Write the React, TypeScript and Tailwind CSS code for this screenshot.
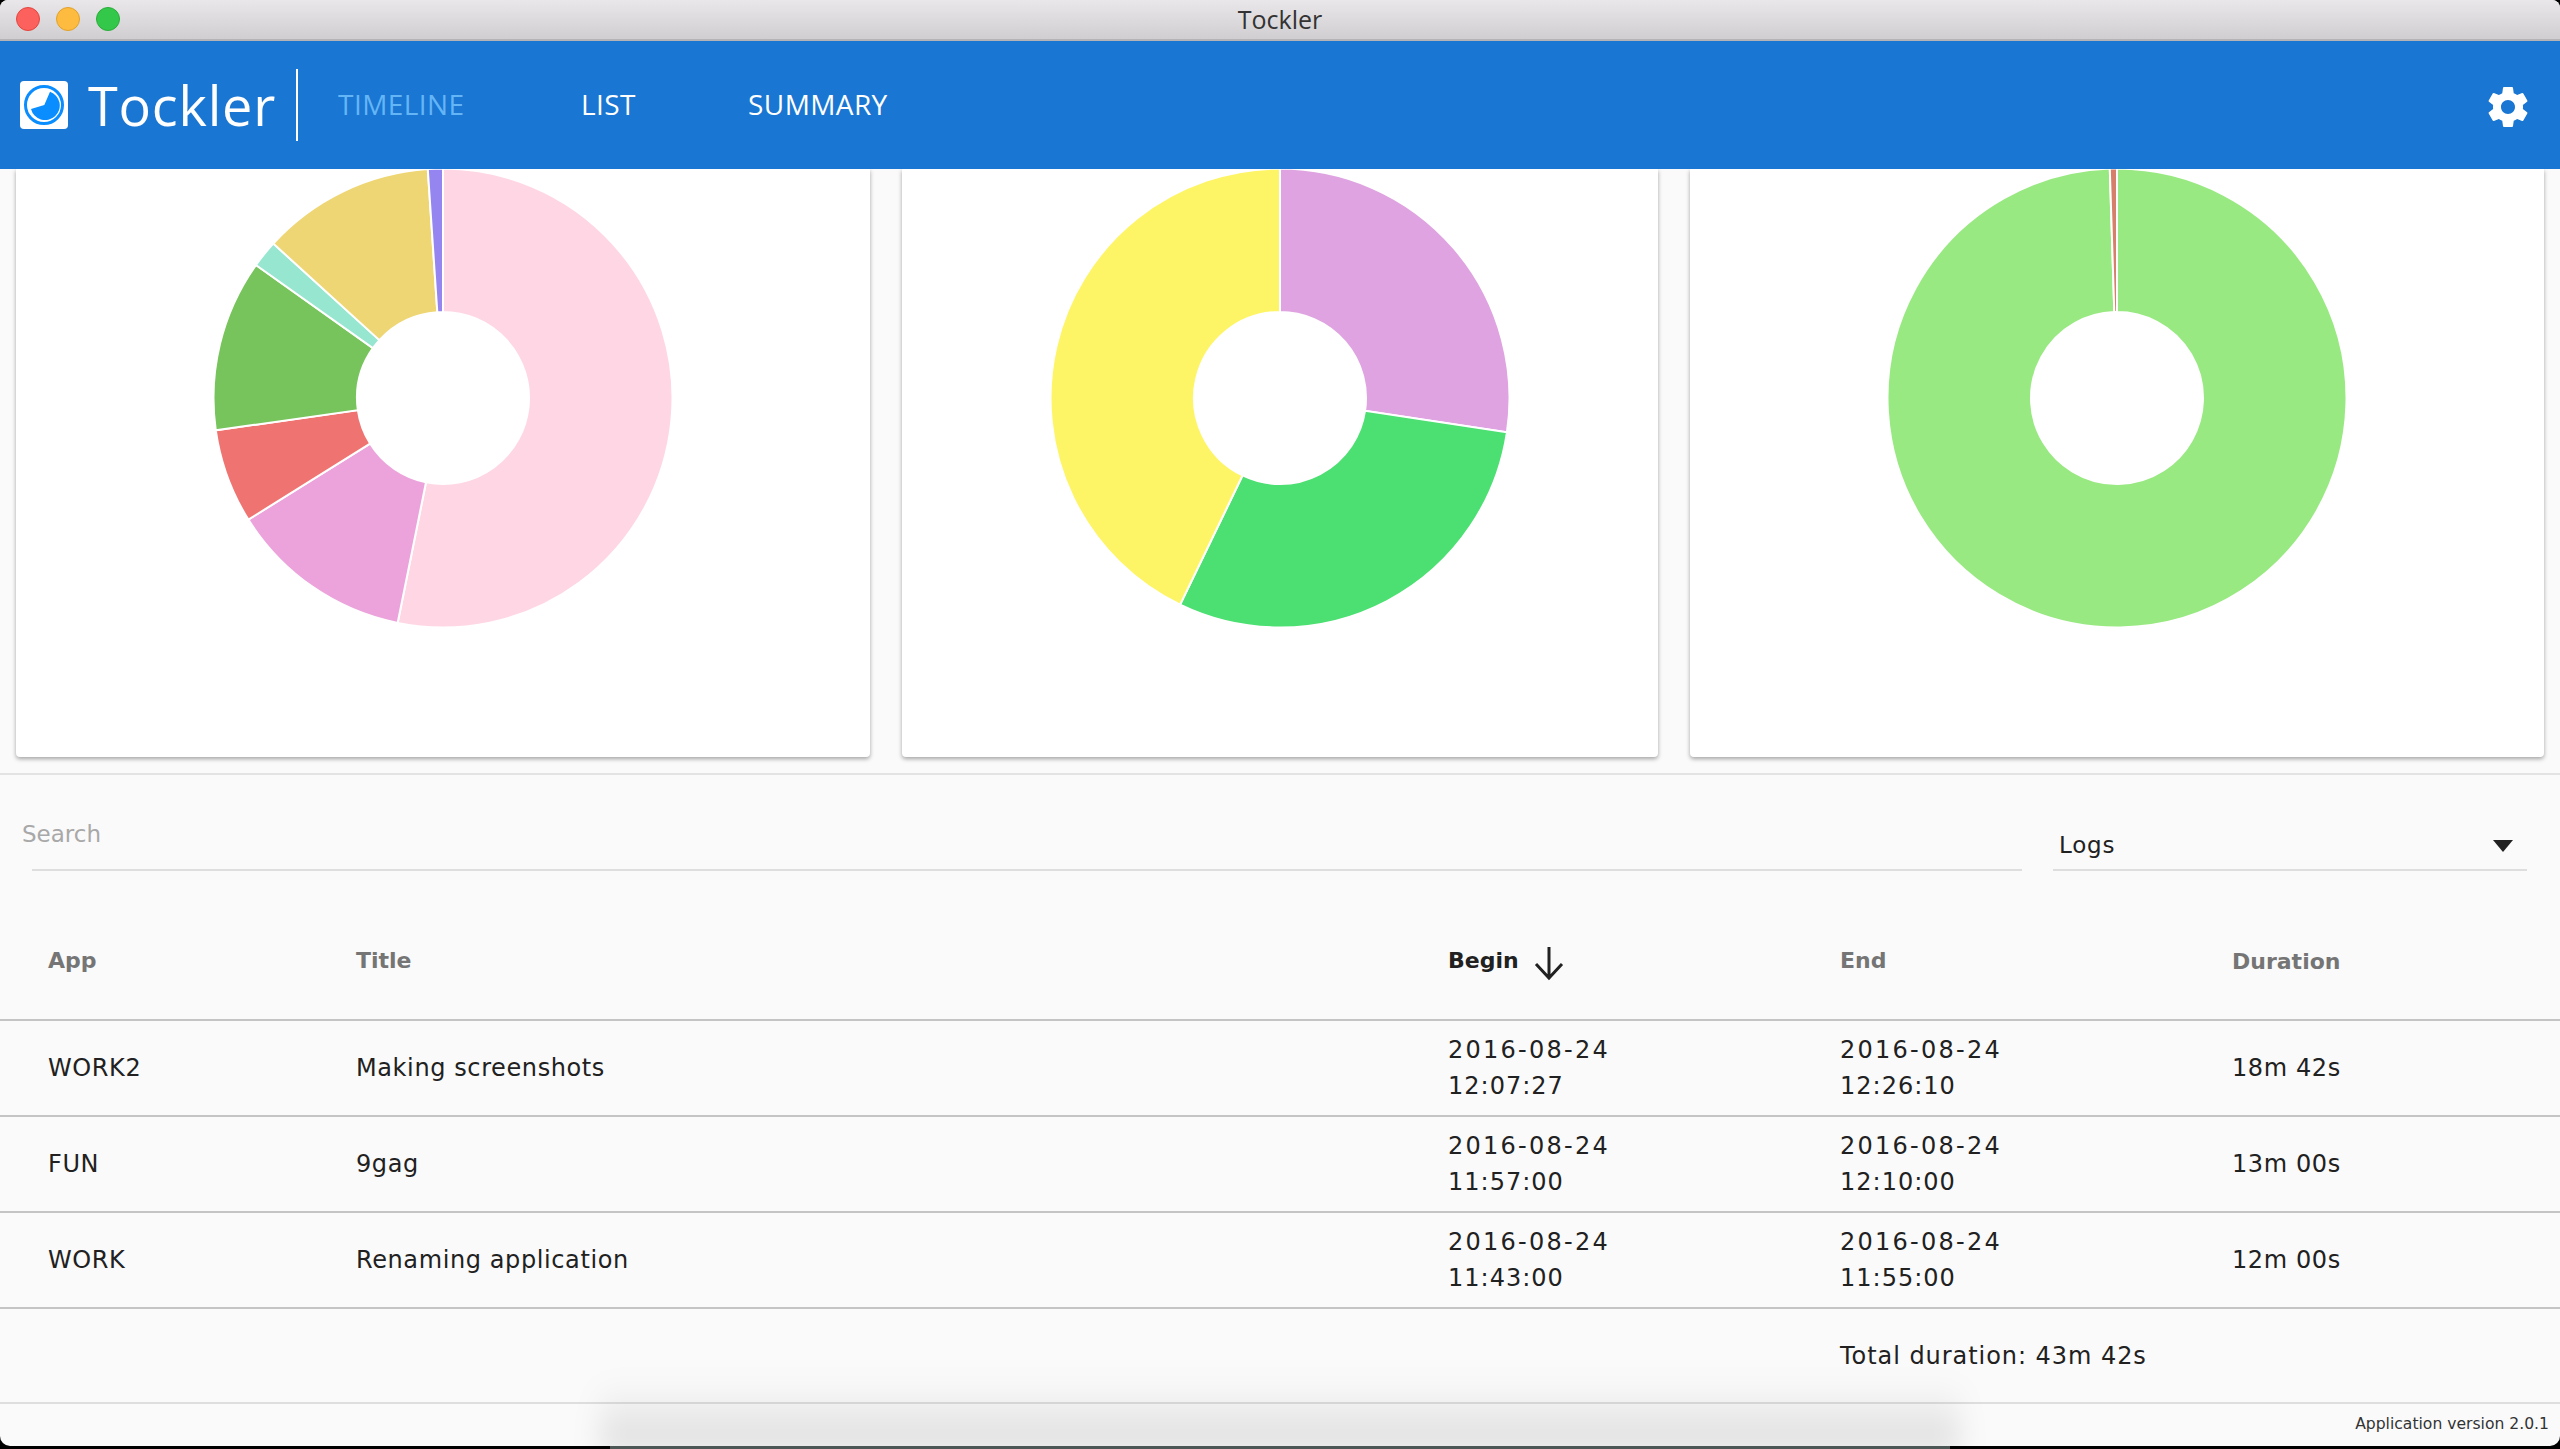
const font = { fontFamily: '"DejaVu Sans", "Noto Sans", sans-serif' };
const headFont = { fontFamily: '"Open Sans", "Noto Sans", sans-serif' };

function polar(cx: number, cy: number, r: number, a: number) {
  const t = (a * Math.PI) / 180;
  return [cx + r * Math.sin(t), cy - r * Math.cos(t)];
}

function slicePath(a0: number, a1: number) {
  const R = 229.5;
  const r = 86;
  const c = 230;
  const [x0, y0] = polar(c, c, R, a0);
  const [x1, y1] = polar(c, c, R, a1);
  const [x2, y2] = polar(c, c, r, a1);
  const [x3, y3] = polar(c, c, r, a0);
  const large = a1 - a0 > 180 ? 1 : 0;
  return `M${x0} ${y0}A${R} ${R} 0 ${large} 1 ${x1} ${y1}L${x2} ${y2}A${r} ${r} 0 ${large} 0 ${x3} ${y3}Z`;
}

function Donut({ slices }: { slices: [number, number, string][] }) {
  return (
    <svg width="460" height="460" viewBox="0 0 460 460" className="-mt-[1px] block shrink-0">
      {slices.map(([a, b, color]) => (
        <path key={a} d={slicePath(a, b)} fill={color} stroke="#ffffff" strokeWidth="2" />
      ))}
    </svg>
  );
}

function Card({ className, children }: { className: string; children: React.ReactNode }) {
  return (
    <div className={`flex justify-center rounded-b-[4px] bg-white shadow-[0_2px_4px_rgba(0,0,0,0.35)] ${className}`}>
      {children}
    </div>
  );
}

const rows = [
  ['WORK2', 'Making screenshots', '2016-08-24', '12:07:27', '2016-08-24', '12:26:10', '18m 42s'],
  ['FUN', '9gag', '2016-08-24', '11:57:00', '2016-08-24', '12:10:00', '13m 00s'],
  ['WORK', 'Renaming application', '2016-08-24', '11:43:00', '2016-08-24', '11:55:00', '12m 00s'],
];

function DateCell({ date, time }: { date: string; time: string }) {
  return (
    <td>
      <span className="block tracking-[2.25px]">{date}</span>
      <span className="block tracking-[1px]">{time}</span>
    </td>
  );
}

export default function App() {
  return (
    <div className="relative h-[1449px] w-[2560px] overflow-hidden bg-black">
      <div className="absolute bottom-0 left-[610px] h-[3px] w-[1340px] bg-[#4d5856]" />
      <div style={font} className="relative flex h-[1446px] w-[2560px] flex-col overflow-hidden rounded-b-[10px] rounded-t-[8px] bg-[#fafafa] text-[#212121]">
        <div style={headFont} className="relative flex h-[41px] shrink-0 items-center justify-center border-b-2 border-[#b5b3b5] bg-gradient-to-b from-[#e9e7e9] to-[#d0ced0]">
          <div className="absolute left-[16px] top-[7px] flex gap-[16px]">
            <span className="h-[24px] w-[24px] rounded-full border border-[#e2463f] bg-[#fc615d]" />
            <span className="h-[24px] w-[24px] rounded-full border border-[#e1a02a] bg-[#fdbc40]" />
            <span className="h-[24px] w-[24px] rounded-full border border-[#2aac3a] bg-[#34c84a]" />
          </div>
          <span className="text-[25px] leading-none text-[#333333]">Tockler</span>
        </div>

        <header style={headFont} className="flex h-[128px] shrink-0 items-center bg-[#1976d2] pl-[20px] pr-[32px] text-white">
          <svg width="48" height="48" viewBox="0 0 48 48" className="shrink-0">
            <rect width="48" height="48" rx="4" fill="#ffffff" />
            <circle cx="24" cy="24" r="18.5" fill="none" stroke="#0a8dff" strokeWidth="3" />
            <path d="M11 28 L24.3 24 L30 10.7 A14.6 14.6 0 1 1 11 28Z" fill="#0a8dff" />
          </svg>
          <span className="ml-[20px] text-[54px] font-normal leading-none tracking-[0.8px]">Tockler</span>
          <span className="ml-[20px] h-[72px] w-[2px] bg-white" />
          <nav className="mb-[2px] ml-[40px] flex text-[28px] leading-none tracking-[0.4px]">
            <span className="w-[243px] text-[#64b5f6]">TIMELINE</span>
            <span className="w-[167px]">LIST</span>
            <span>SUMMARY</span>
          </nav>
          <svg width="48" height="48" viewBox="0 0 24 24" fill="#ffffff" className="-mr-[4px] ml-auto mt-[4px]">
            <path d="M19.43 12.98c.04-.32.07-.64.07-.98s-.03-.66-.07-.98l2.11-1.65c.19-.15.24-.42.12-.64l-2-3.46c-.12-.22-.39-.3-.61-.22l-2.49 1c-.52-.4-1.08-.73-1.69-.98l-.38-2.65C14.46 2.18 14.25 2 14 2h-4c-.25 0-.46.18-.49.42l-.38 2.65c-.61.25-1.17.59-1.69.98l-2.49-1c-.23-.09-.49 0-.61.22l-2 3.46c-.13.22-.07.49.12.64l2.11 1.65c-.04.32-.07.65-.07.98s.03.66.07.98l-2.11 1.65c-.19.15-.24.42-.12.64l2 3.46c.12.22.39.3.61.22l2.49-1c.52.4 1.08.73 1.69.98l.38 2.65c.03.24.24.42.49.42h4c.25 0 .46-.18.49-.42l.38-2.65c.61-.25 1.17-.59 1.69-.98l2.49 1c.23.09.49 0 .61-.22l2-3.46c.12-.22.07-.49-.12-.64l-2.11-1.65zM12 15.5c-1.93 0-3.5-1.57-3.5-3.5s1.57-3.5 3.5-3.5 3.5 1.57 3.5 3.5-1.57 3.5-3.5 3.5z" />
          </svg>
        </header>

        <section className="flex h-[606px] shrink-0 gap-[32px] overflow-hidden border-b-2 border-[#e3e3e3] pb-[16px] pl-[16px] pr-[16px]">
          <Card className="w-[854px]">
            <Donut
              slices={[
                [0, 191.4, '#ffd6e3'],
                [191.4, 238, '#eca3db'],
                [238, 261.9, '#ef7471'],
                [261.9, 305.4, '#78c45c'],
                [305.4, 312.3, '#96e6d0'],
                [312.3, 356.2, '#efd674'],
                [356.2, 360, '#9585f0'],
              ]}
            />
          </Card>
          <Card className="w-[756px]">
            <Donut
              slices={[
                [0, 98.6, '#dea3e0'],
                [98.6, 205.8, '#4cdf72'],
                [205.8, 360, '#fef566'],
              ]}
            />
          </Card>
          <Card className="w-[854px]">
            <Donut
              slices={[
                [0, 358.2, '#99e982'],
                [358.2, 360, '#d67f6b'],
              ]}
            />
          </Card>
        </section>

        <div className="flex h-[96px] shrink-0 items-start">
          <div className="relative ml-[32px] h-[96px] w-[1990px] border-b-2 border-[#dedede]">
            <span className="absolute -left-[10px] top-[48px] text-[23px] leading-none text-[#a8a8a8]">Search</span>
          </div>
          <div className="relative ml-[31px] flex h-[96px] w-[474px] items-end justify-between border-b-2 border-[#dedede] pb-[12px] pl-[6px] pr-[14px]">
            <span className="text-[23px] leading-none tracking-[0.8px]">Logs</span>
            <svg width="20" height="12" viewBox="0 0 20 12" className="mb-[5px]">
              <path d="M0 0H20L10 12Z" fill="#212121" />
            </svg>
          </div>
        </div>

        <table className="w-full shrink-0 table-fixed border-collapse text-left text-[24px] leading-[36px] tracking-[0.6px]">
          <colgroup>
            <col className="w-[356px]" />
            <col className="w-[1092px]" />
            <col className="w-[392px]" />
            <col className="w-[392px]" />
            <col />
          </colgroup>
          <thead>
            <tr className="h-[149px] border-b-2 border-[#c4c4c4] text-[22px] tracking-normal text-[#757575]">
              <th className="pl-[48px] pt-[32px] font-bold">App</th>
              <th className="pt-[32px] font-bold">Title</th>
              <th className="pt-[32px] font-bold text-[#212121]">
                <span className="inline-flex items-center gap-[14px]">
                  Begin
                  <svg width="32" height="36" viewBox="0 0 32 36" fill="none" stroke="#212121" strokeWidth="3" className="mt-[4px]">
                    <path d="M16 2V33M3 19L16 33L29 19" />
                  </svg>
                </span>
              </th>
              <th className="pt-[32px] font-bold">End</th>
              <th className="pt-[34px] font-bold">Duration</th>
            </tr>
          </thead>
          <tbody>
            {rows.map((r) => (
              <tr key={r[0]} className="h-[96px] border-b-2 border-[#c4c4c4]">
                <td className="pl-[48px]">{r[0]}</td>
                <td>{r[1]}</td>
                <DateCell date={r[2]} time={r[3]} />
                <DateCell date={r[4]} time={r[5]} />
                <td>{r[6]}</td>
              </tr>
            ))}
            <tr className="h-[94px]">
              <td colSpan={3} />
              <td colSpan={2} className="tracking-[0.95px]">Total duration: 43m 42s</td>
            </tr>
          </tbody>
        </table>

        <footer className="flex h-[41px] shrink-0 items-center justify-end border-t-2 border-[#dedede] pr-[11px] pt-[3px] text-[15.6px] leading-none text-[#333333]">
          Application version 2.0.1
        </footer>

        <div className="pointer-events-none absolute -bottom-[6px] left-[600px] h-[72px] w-[1360px] bg-gradient-to-t from-black/12 to-transparent blur-[14px]" />
      </div>
    </div>
  );
}
